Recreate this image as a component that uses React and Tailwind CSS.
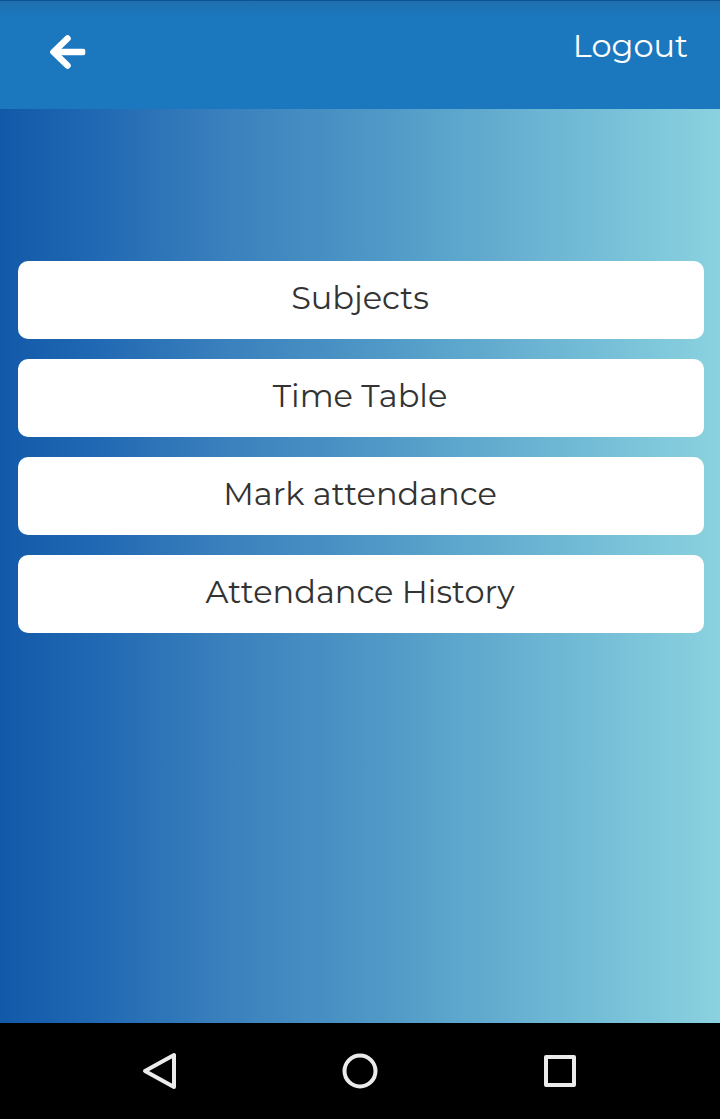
const menuItems = ["Subjects", "Time Table", "Mark attendance", "Attendance History"];

function Header() {
  return (
    <header className="flex items-start justify-between bg-[#1c78be] bg-linear-to-b from-[#1f6fae] to-[#1c78be] to-15% border-t border-[#0c5490] pb-10 pl-12 pr-8 pt-6">
      <button type="button" aria-label="Back" className="mt-2 text-white">
        <svg width="40" height="36" viewBox="0 0 40 36" fill="none" stroke="currentColor" strokeLinecap="round" strokeLinejoin="round" aria-hidden="true">
          <path d="M19.500 5.500 5.500 19l14 13.500" strokeWidth="6.500" />
          <path d="M4 19 9 14v10Z" fill="currentColor" strokeWidth="3" />
          <path d="M8 19h27" strokeWidth="6.500" strokeLinecap="butt" />
          <path d="M35.500 17.500v3" strokeWidth="3.500" />
        </svg>
      </button>
      <a href="#logout" className="text-[32px] leading-[42px] font-normal text-white">
        Logout
      </a>
    </header>
  );
}

function NavigationBar() {
  return (
    <nav aria-label="System" className="flex h-24 items-center justify-center bg-black text-[#ebebeb]">
      <div className="grid w-5/6 grid-cols-3 justify-items-center">
        <button type="button" aria-label="Back">
          <svg width="40" height="40" viewBox="0 0 40 40" fill="none" stroke="currentColor" strokeWidth="4" strokeLinejoin="round" aria-hidden="true">
            <path d="M34 4v32L5 20Z" />
          </svg>
        </button>
        <button type="button" aria-label="Home">
          <svg width="40" height="40" viewBox="0 0 40 40" fill="none" stroke="currentColor" strokeWidth="4" aria-hidden="true">
            <circle cx="20" cy="20" r="15.500" />
          </svg>
        </button>
        <button type="button" aria-label="Recent apps">
          <svg width="40" height="40" viewBox="0 0 40 40" fill="none" stroke="currentColor" strokeWidth="4" strokeLinejoin="round" aria-hidden="true">
            <rect x="6" y="6" width="28" height="28" />
          </svg>
        </button>
      </div>
    </nav>
  );
}

export default function App() {
  return (
    <div className="flex min-h-screen flex-col font-['Montserrat','Inter',sans-serif]">
      <Header />
      <main className="flex grow flex-col gap-5 bg-[linear-gradient(to_right,#125aa9,#2169b3_14%,#3a80bd_31%,#4c95c5_50%,#6bb4d3_75%,#8ad2df)] pb-10 pl-[18px] pr-4 pt-[152px]">
        {menuItems.map((label) => (
          <button
            key={label}
            type="button"
            className="w-full rounded-[10px] bg-white pb-[21px] pr-0.5 pt-[17px] text-center text-[32px] leading-10 font-normal text-[#333333]"
          >
            {label}
          </button>
        ))}
      </main>
      <NavigationBar />
    </div>
  );
}
